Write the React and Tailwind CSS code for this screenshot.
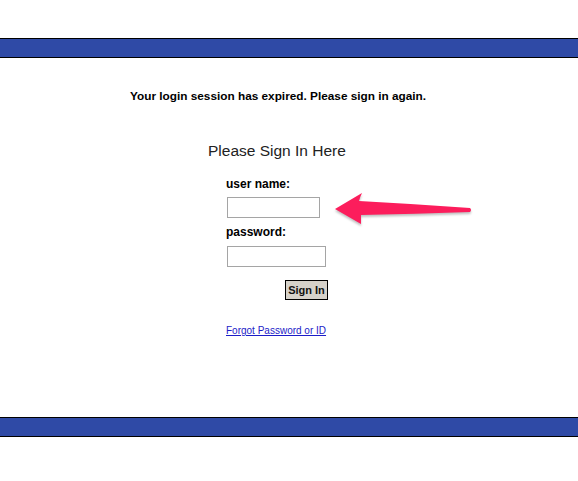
import React from 'react'

function Bar() {
  return <div className="h-[20px] w-full border-y border-black bg-[#2f4aa6]" />
}

export default function App() {
  return (
    <div className="relative min-h-[481px] w-full bg-white font-['Liberation_Sans',Arial,sans-serif] text-black">
      <div className="h-[38px]" />
      <Bar />

      <p className="mt-[31px] pl-[130px] text-[11.8px] font-bold leading-[14px]">
        Your login session has expired. Please sign in again.
      </p>

      <h2 className="mt-[39px] pl-[208px] text-[15.5px] leading-[18px] text-[#222]">Please Sign In Here</h2>

      <form className="flex flex-col items-start pl-[226px]" onSubmit={(e) => e.preventDefault()}>
        <label className="mt-[17px] text-[12px] font-bold leading-[14px]">user name:</label>
        <input type="text" className="ml-px mt-[6px] h-[21px] w-[93px] border border-[#a5a5a5] bg-white px-1 text-[12px] outline-none" />

        <label className="mt-[7px] text-[12px] font-bold leading-[14px]">password:</label>
        <input type="password" className="ml-px mt-[7px] h-[21px] w-[99px] border border-[#a5a5a5] bg-white px-1 text-[12px] outline-none" />

        <button type="submit" className="ml-[59px] mt-[13px] flex h-[20px] w-[43px] items-center justify-center border border-black bg-[#d6d2ca] text-[11px] font-bold leading-none text-[#111]">
          Sign In
        </button>

        <a href="#" className="mt-[25px] text-[10px] leading-[12px] text-[#1c1cc8] underline">
          Forgot Password or ID
        </a>
      </form>

      <div className="mt-[80px]">
        <Bar />
      </div>

      <svg
        className="absolute left-[330px] top-[188px] drop-shadow-[0_2px_1px_rgba(0,0,0,0.25)]"
        width="145"
        height="40"
        viewBox="0 0 145 40"
      >
        <path
          d="M5 21 L32 5 Q30 9 29 13 Q85 16 140 20 Q142 22 140 24 Q85 26 31 27 Q31 32 31 36 Z"
          fill="#fc1d5c"
        />
      </svg>
    </div>
  )
}
